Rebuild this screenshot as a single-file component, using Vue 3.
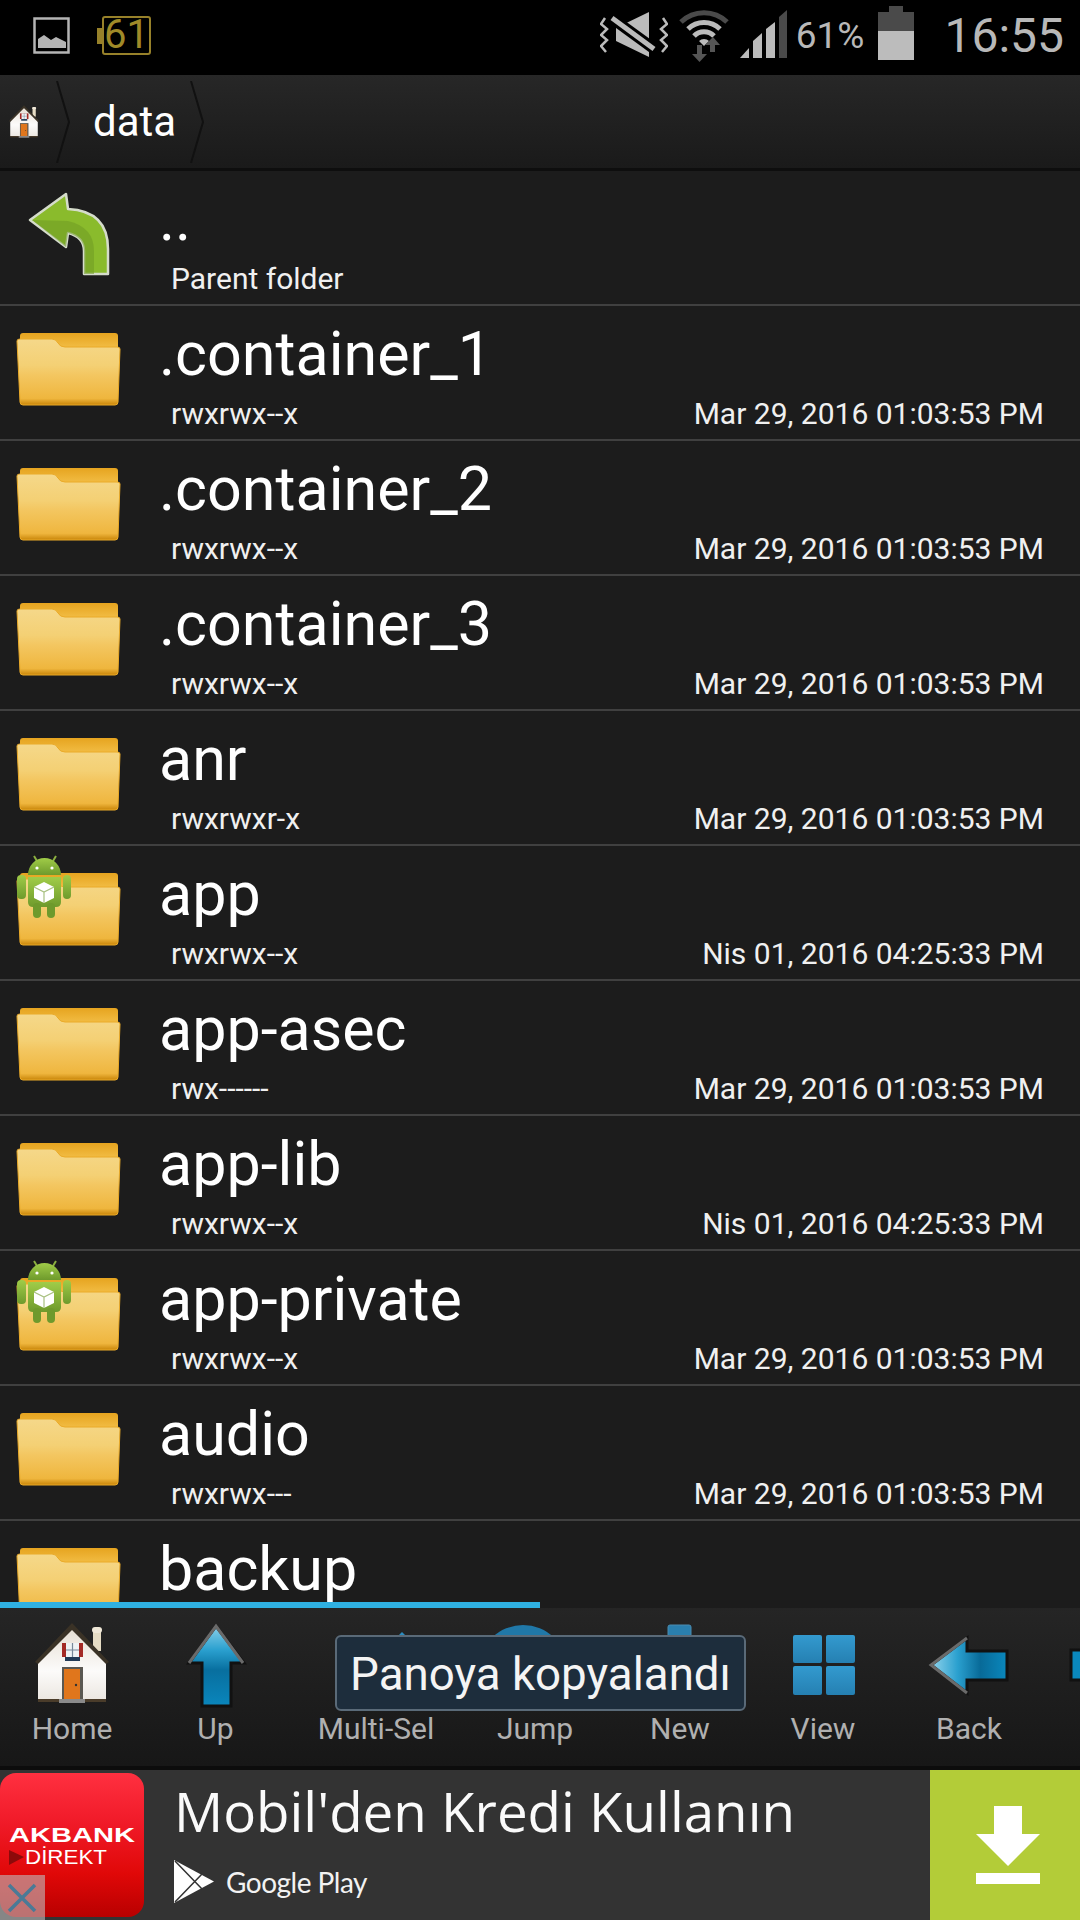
<template>
  <div class="phone">
    <!-- shared icon shapes -->
    <svg class="defs" width="0" height="0">
      <defs>
        <linearGradient id="fTop" x1="0" y1="0" x2="0" y2="1">
          <stop offset="0" stop-color="#e6a41f" /><stop offset="1" stop-color="#f2bd45" />
        </linearGradient>
        <linearGradient id="fBody" x1="0" y1="0" x2="0" y2="1">
          <stop offset="0" stop-color="#f5d88a" />
          <stop offset="0.4" stop-color="#f4d074" />
          <stop offset="0.55" stop-color="#f3c660" />
          <stop offset="0.9" stop-color="#efb63e" />
          <stop offset="1" stop-color="#c98508" />
        </linearGradient>
        <linearGradient id="droid" x1="0" y1="0" x2="0" y2="1">
          <stop offset="0" stop-color="#a0cc48" /><stop offset="1" stop-color="#6e9a2c" />
        </linearGradient>
        <linearGradient id="upBlue" x1="0" y1="0" x2="0" y2="1">
          <stop offset="0" stop-color="#8ad0ea" />
          <stop offset="0.3" stop-color="#2aa0cf" />
          <stop offset="0.55" stop-color="#086f9f" />
          <stop offset="1" stop-color="#0a86bc" />
        </linearGradient>
        <linearGradient id="backBlue" x1="0" y1="0" x2="1" y2="0">
          <stop offset="0" stop-color="#92d4ec" />
          <stop offset="0.35" stop-color="#2aa0cf" />
          <stop offset="0.65" stop-color="#086a98" />
          <stop offset="1" stop-color="#0a88bd" />
        </linearGradient>
        <linearGradient id="tile" x1="0" y1="0" x2="0" y2="1">
          <stop offset="0" stop-color="#339acf" /><stop offset="1" stop-color="#2580b2" />
        </linearGradient>
        <linearGradient id="wall" x1="0" y1="0" x2="0" y2="1">
          <stop offset="0" stop-color="#e6dfd4" /><stop offset="0.6" stop-color="#fcfbfa" /><stop offset="1" stop-color="#ece8e2" />
        </linearGradient>

        <g id="folder">
          <path d="M20 31q0-3 3-3h92q3 0 3 3v12H20z" fill="url(#fTop)" />
          <path d="M17 36q0-2 3-2h32q4 0 6 4t7 4h52q3 0 3 2l-2 53q0 3-3 3H23q-3 0-3-3z" fill="url(#fBody)" stroke="#eaaa28" stroke-width="1" />
        </g>

        <g id="droidBadge">
          <path d="M34 11l3 5M56 11l-3 5" stroke="#8cb040" stroke-width="2" />
          <path d="M28 30a16.500 17 0 0 1 33 0z" fill="url(#droid)" />
          <circle cx="37" cy="23" r="1.600" fill="#fff" /><circle cx="52" cy="23" r="1.600" fill="#fff" />
          <path d="M28 32h33v25q0 5-5 5H33q-5 0-5-5z" fill="url(#droid)" />
          <rect x="17" y="30" width="9" height="24" rx="4" fill="url(#droid)" />
          <rect x="63" y="30" width="8" height="24" rx="4" fill="url(#droid)" />
          <rect x="33" y="58" width="8" height="15" rx="4" fill="#6e9a2c" />
          <rect x="47" y="58" width="8" height="15" rx="4" fill="#6e9a2c" />
          <path d="M44 37l10 5v11l-10 5-10-5V42z" fill="#fff" />
          <path d="M34 42l10 5 10-5M44 47v11" fill="none" stroke="#a8c080" stroke-width="1.200" />
        </g>

        <g id="house">
          <rect x="58" y="6" width="8" height="22" fill="#e6dcc4" />
          <rect x="57" y="4" width="10" height="6" rx="3" fill="#f0e8d8" />
          <path d="M3 37L37 6l34 31v39H3z" fill="url(#wall)" />
          <path d="M0 39L37 0l37 39-3 2-34-34L3 41z" fill="#3a3226" />
          <rect x="3" y="76" width="68" height="3" fill="#4a3c2a" />
          <rect x="27" y="20" width="21" height="14" fill="#a32a26" />
          <rect x="31" y="20" width="13" height="14" fill="#eef2f4" />
          <path d="M37.500 20v14M31 27h13" stroke="#778899" stroke-width="1.200" />
          <rect x="30" y="34" width="15" height="4" fill="#223a56" />
          <rect x="27" y="44" width="21" height="33" fill="#5a5852" />
          <rect x="29" y="46" width="16" height="31" fill="#e0761c" />
          <circle cx="41" cy="62" r="1.200" fill="#333" />
          <rect x="24" y="76" width="26" height="4" fill="#8a8a8a" />
        </g>

        <g id="arrowUp">
          <path d="M28 1L1 38h13v43h29V38h13z" fill="url(#upBlue)" stroke="#111" stroke-width="3" />
          <path d="M1 38L28 1l27 37" fill="none" stroke="#6a6a6a" stroke-width="3" />
        </g>
        <g id="arrowBack">
          <path d="M2 28L38 1v13h40v29H38v13z" fill="url(#backBlue)" stroke="#111" stroke-width="3" />
          <path d="M38 56L2 28 38 1" fill="none" stroke="#6a6a6a" stroke-width="3" />
        </g>
        <g id="grid">
          <rect x="0" y="0" width="29" height="28" rx="2" fill="url(#tile)" />
          <rect x="33" y="0" width="29" height="28" rx="2" fill="url(#tile)" />
          <rect x="0" y="31" width="29" height="29" rx="2" fill="url(#tile)" />
          <rect x="33" y="31" width="29" height="29" rx="2" fill="url(#tile)" />
        </g>
        <g id="multi"><path d="M0 4l4-4 4 4v20H0z" fill="#2a8cc0" /></g>
        <g id="jump"><circle cx="44" cy="44" r="44" fill="#2078a8" /></g>
        <g id="plus"><rect x="0" y="0" width="23" height="40" rx="2" fill="#2a7fae" stroke="#4a8cb0" /></g>
        <g id="next"><rect x="0" y="0" width="60" height="30" fill="#0a88bd" stroke="#111" stroke-width="3" /></g>
      </defs>
    </svg>

    <div class="status-bar">
      <svg class="st-image" viewBox="0 0 37 37">
        <rect x="1.500" y="1.500" width="34" height="34" fill="none" stroke="#b4b4b4" stroke-width="2.500" />
        <path d="M5 31V22l6-4 7 5 5-3 6 3 4 2v6z" fill="#b4b4b4" />
      </svg>
      <div class="st-battery-old">
        <span>61</span>
      </div>
      <div class="st-spacer"></div>
      <svg class="st-mute" viewBox="0 0 68 45">
        <path d="M5 6l-4 6 6 5-6 6 6 5-6 6 5 6M63 6l4 6-6 5 6 6-6 5 6 6-5 6" fill="none" stroke="#bbb" stroke-width="2.500" />
        <path d="M16 16L49 0v45L16 29z" fill="#bbb" />
        <path d="M9 4l48 35" stroke="#000" stroke-width="11" />
        <path d="M12 6l42 31" stroke="#bbb" stroke-width="5" />
      </svg>
      <svg class="st-wifi" viewBox="0 0 50 54">
        <path d="M2 14a33 33 0 0 1 46 0" fill="none" stroke="#4a4a4a" stroke-width="5" />
        <path d="M9 21a23 23 0 0 1 32 0" fill="none" stroke="#bbb" stroke-width="5" />
        <path d="M15 28a14 14 0 0 1 20 0" fill="none" stroke="#bbb" stroke-width="5" />
        <path d="M20 33a7 7 0 0 1 10 0l-5 5z" fill="#bbb" />
        <path d="M18 37h5v9h5l-7.500 8-7.500-8h5z" fill="#555" />
        <path d="M31 44v-7h-5l8-8 7 8h-5v7z" fill="#555" />
      </svg>
      <svg class="st-signal" viewBox="0 0 47 50">
        <path d="M0 48l9-10v10z" fill="#bbb" />
        <path d="M13 48V31l9-8v25z" fill="#bbb" />
        <path d="M26 48V19l9-7v36z" fill="#bbb" />
        <path d="M39 48V7l8-7v48z" fill="#4a4a4a" />
      </svg>
      <span class="st-percent">61%</span>
      <svg class="st-battery" viewBox="0 0 36 54">
        <path d="M11 0h14v6h11v19H0V6h11z" fill="#4a4a4a" />
        <rect x="0" y="25" width="36" height="29" fill="#bcbcbc" />
      </svg>
      <span class="st-time">16:55</span>
    </div>

    <div class="crumbs">
      <svg class="crumb-home" viewBox="0 0 74 80"><use href="#house" /></svg>
      <svg class="crumb-chev first" viewBox="0 0 14 82">
        <path d="M1 0l12 41L1 82" fill="none" stroke="#111" stroke-width="2" />
      </svg>
      <span class="crumb-text">data</span>
      <svg class="crumb-chev" viewBox="0 0 14 82">
        <path d="M1 0l12 41L1 82" fill="none" stroke="#111" stroke-width="2" />
      </svg>
    </div>

    <div class="list">
      <div class="row">
        <svg class="row-icon" viewBox="0 1 120 135">
          <path d="M30 50L66 24l2 15q40 2 40 40v25H84V81q0-14-16-18l-2 14z" fill="#8abb2c" stroke="#d5dccb" stroke-width="2.500" stroke-linejoin="round" />
          <path d="M32 50l34 27 2-14q16 4 16 18v23h10V81q0-24-26-30z" fill="#6f9a24" opacity="0.55" />
        </svg>
        <div class="row-text">
          <div class="row-name">..</div>
          <div class="row-meta"><span>Parent folder</span></div>
        </div>
      </div>
      <div v-for="f in folders" :key="f.name" class="row">
        <svg class="row-icon" viewBox="0 1 120 135">
          <use href="#folder" />
          <use v-if="f.droid" href="#droidBadge" />
        </svg>
        <div class="row-text">
          <div class="row-name">{{ f.name }}</div>
          <div class="row-meta">
            <span>{{ f.perm }}</span>
            <span>{{ f.date }}</span>
          </div>
        </div>
      </div>
    </div>

    <div class="progress"><div class="progress-fill"></div></div>

    <div class="toolbar">
      <div v-for="t in tools" :key="t.id" class="tool" :style="{ width: t.width + 'px' }">
        <svg class="tool-icon" viewBox="0 0 120 100">
          <use :href="'#' + t.icon" :x="t.x" :y="t.y" />
        </svg>
        <span class="tool-label">{{ t.label }}</span>
      </div>
      <div class="toast">Panoya kopyalandı</div>
    </div>

    <div class="ad">
      <div class="ad-logo">
        <svg class="ad-logo-text" viewBox="0 0 144 144">
          <text x="9" y="69" textLength="126" lengthAdjust="spacingAndGlyphs" class="akbank">AKBANK</text>
          <path d="M9 77l15 7-15 8z" fill="#8c0a0a" />
          <text x="25" y="91" textLength="82" lengthAdjust="spacingAndGlyphs" class="direkt">DİREKT</text>
        </svg>
        <div class="ad-close">
          <svg viewBox="0 0 45 45"><path d="M9 10l26 26M35 10L9 36" stroke="#4a7a96" stroke-width="3.500" /></svg>
        </div>
      </div>
      <div class="ad-body">
        <div class="ad-title">Mobil'den Kredi Kullanın</div>
        <div class="ad-store">
          <svg class="play" viewBox="0 0 40 43">
            <path d="M0 0l40 21.500L0 43z" fill="#fff" />
            <path d="M1 1l27 28M1 42l27-28" stroke="#333" stroke-width="1.500" />
          </svg>
          <span class="store-text">Google Play</span>
        </div>
      </div>
      <div class="ad-get">
        <svg viewBox="0 0 64 78">
          <path d="M18 0h28v28h18L32 60 0 28h18z" fill="#fff" />
          <rect x="0" y="67" width="64" height="11" fill="#fff" />
        </svg>
      </div>
    </div>
  </div>
</template>

<script setup>
const stamp = 'Mar 29, 2016 01:03:53 PM'
const nis = 'Nis 01, 2016 04:25:33 PM'

const folders = [
  { name: '.container_1', perm: 'rwxrwx--x', date: stamp },
  { name: '.container_2', perm: 'rwxrwx--x', date: stamp },
  { name: '.container_3', perm: 'rwxrwx--x', date: stamp },
  { name: 'anr', perm: 'rwxrwxr-x', date: stamp },
  { name: 'app', perm: 'rwxrwx--x', date: nis, droid: true },
  { name: 'app-asec', perm: 'rwx------', date: stamp },
  { name: 'app-lib', perm: 'rwxrwx--x', date: nis },
  { name: 'app-private', perm: 'rwxrwx--x', date: stamp, droid: true },
  { name: 'audio', perm: 'rwxrwx---', date: stamp },
  { name: 'backup', perm: 'rwxrwx--x', date: stamp }
]

// x/y place each drawing inside the 120x100 icon frame
const tools = [
  { id: 'home', label: 'Home', width: 144, icon: 'house', x: 23, y: 15 },
  { id: 'up', label: 'Up', width: 143, icon: 'arrowUp', x: 32, y: 17 },
  { id: 'multi', label: 'Multi-Sel', width: 178, icon: 'multi', x: 82, y: 24 },
  { id: 'jump', label: 'Jump', width: 140, icon: 'jump', x: 4, y: 17 },
  { id: 'new', label: 'New', width: 150, icon: 'plus', x: 48, y: 17 },
  { id: 'view', label: 'View', width: 136, icon: 'grid', x: 30, y: 27 },
  { id: 'back', label: 'Back', width: 156, icon: 'arrowBack', x: 20, y: 29 },
  { id: 'next', label: '', width: 156, icon: 'next', x: 6, y: 42 }
]
</script>

<style scoped>
.phone {
  width: 1080px;
  height: 1920px;
  display: flex;
  flex-direction: column;
  overflow: hidden;
  background: #1c1c1c;
  font-family: Roboto, "Liberation Sans", sans-serif;
  color: #fff;
}

.defs {
  position: absolute;
}

/* status bar */
.status-bar {
  height: 75px;
  flex-shrink: 0;
  background: #000;
  display: flex;
  align-items: center;
  padding: 0 16px 0 33px;
  color: #b8b8b8;
}
.st-image {
  width: 37px;
  height: 37px;
  margin-bottom: 5px;
}
.st-battery-old {
  width: 49px;
  height: 39px;
  margin: 0 0 4px 32px;
  border: 2px solid #97812a;
  border-radius: 3px;
  box-sizing: border-box;
  color: #a08a28;
  font-size: 40px;
  line-height: 34px;
  text-align: center;
  position: relative;
}
.st-battery-old::before {
  content: '';
  position: absolute;
  left: -7px;
  top: 10px;
  width: 5px;
  height: 16px;
  background: #97812a;
}
.st-spacer {
  flex: 1;
}
.st-mute {
  width: 68px;
  height: 45px;
  margin-bottom: 6px;
}
.st-wifi {
  width: 50px;
  height: 54px;
  margin: 0 0 5px 11px;
}
.st-signal {
  width: 47px;
  height: 50px;
  margin: 0 0 5px 11px;
}
.st-percent {
  font-size: 37px;
  margin: 0 0 5px 9px;
}
.st-battery {
  width: 36px;
  height: 54px;
  margin: 0 0 9px 14px;
}
.st-time {
  font-size: 48px;
  margin: 0 0 4px 30px;
}

/* breadcrumb */
.crumbs {
  height: 96px;
  flex-shrink: 0;
  box-sizing: border-box;
  display: flex;
  align-items: center;
  background: linear-gradient(#272727, #1a1a1a);
  border-bottom: 3px solid #0e0e0e;
}
.crumb-home {
  width: 30px;
  height: 33px;
  margin: 0 0 0 9px;
}
.crumb-chev {
  width: 14px;
  height: 82px;
  flex-shrink: 0;
}
.crumb-chev.first {
  margin-left: 17px;
}
.crumb-text {
  font-size: 42px;
  margin: 0 14px 0 23px;
}

/* folder list */
.list {
  flex: 1;
  min-height: 0;
  overflow: hidden;
}
.row {
  height: 135px;
  box-sizing: border-box;
  border-bottom: 2px solid #404040;
  display: flex;
}
.row-icon {
  width: 120px;
  height: 135px;
  flex-shrink: 0;
  overflow: visible;
}
.row-text {
  flex: 1;
  min-width: 0;
  padding: 15px 36px 0 39px;
}
.row-name {
  font-size: 61px;
  line-height: 66px;
}
.row-meta {
  display: flex;
  justify-content: space-between;
  margin-top: 10px;
  padding-left: 12px;
  font-size: 30px;
  line-height: 34px;
  color: #f0f0f0;
}

/* scroll progress */
.progress {
  height: 6px;
  flex-shrink: 0;
}
.progress-fill {
  width: 50%;
  height: 100%;
  background: #2fb1e2;
}

/* bottom toolbar */
.toolbar {
  height: 162px;
  flex-shrink: 0;
  box-sizing: border-box;
  position: relative;
  display: flex;
  overflow: hidden;
  background: linear-gradient(#252525, #171717);
  border-bottom: 4px solid #0c0c0c;
}
.tool {
  flex-shrink: 0;
  display: flex;
  flex-direction: column;
  align-items: center;
}
.tool-icon {
  width: 120px;
  height: 100px;
  flex-shrink: 0;
}
.tool-label {
  margin-top: 3px;
  font-size: 30px;
  line-height: 35px;
  color: #b0b0b0;
  white-space: nowrap;
}
.toast {
  position: absolute;
  left: 335px;
  top: 27px;
  width: 411px;
  height: 76px;
  box-sizing: border-box;
  background: #1d2d3c;
  border: 2px solid #5a6a78;
  border-radius: 6px;
  font-size: 45.7px;
  line-height: 76px;
  text-align: center;
  color: #f4f4f4;
  white-space: nowrap;
}

/* ad banner */
.ad {
  height: 150px;
  flex-shrink: 0;
  display: flex;
  background: #333;
}
.ad-logo {
  width: 144px;
  height: 144px;
  margin-top: 3px;
  flex-shrink: 0;
  position: relative;
  border-radius: 16px;
  overflow: visible;
  background: linear-gradient(#ff3040, #f01a28 35%, #e00808 70%, #b80000);
}
.ad-logo-text {
  width: 144px;
  height: 144px;
  display: block;
}
.akbank {
  font-family: "Liberation Sans", sans-serif;
  font-weight: 700;
  font-size: 21px;
  fill: #fff;
}
.direkt {
  font-family: "Liberation Sans", sans-serif;
  font-size: 21px;
  fill: #fff;
}
.ad-close {
  position: absolute;
  left: 0;
  top: 102px;
  width: 45px;
  height: 45px;
  background: rgba(190, 190, 190, 0.6);
}
.ad-close svg {
  display: block;
  width: 45px;
  height: 45px;
}
.ad-body {
  flex: 1;
  min-width: 0;
  padding-left: 30px;
}
.ad-title {
  font-family: "Open Sans", sans-serif;
  font-size: 54.7px;
  line-height: 70px;
  margin-top: 6px;
  white-space: nowrap;
  color: #fafafa;
}
.ad-store {
  display: flex;
  align-items: center;
  margin-top: 14px;
}
.play {
  width: 40px;
  height: 43px;
  margin-right: 12px;
}
.store-text {
  font-family: Lato, sans-serif;
  font-size: 28px;
  letter-spacing: -0.5px;
  color: #f2f2f2;
}
.ad-get {
  width: 150px;
  flex-shrink: 0;
  display: flex;
  justify-content: center;
  background: #b3cc38;
}
.ad-get svg {
  width: 64px;
  height: 78px;
  margin: 36px 0 0 6px;
}
</style>
